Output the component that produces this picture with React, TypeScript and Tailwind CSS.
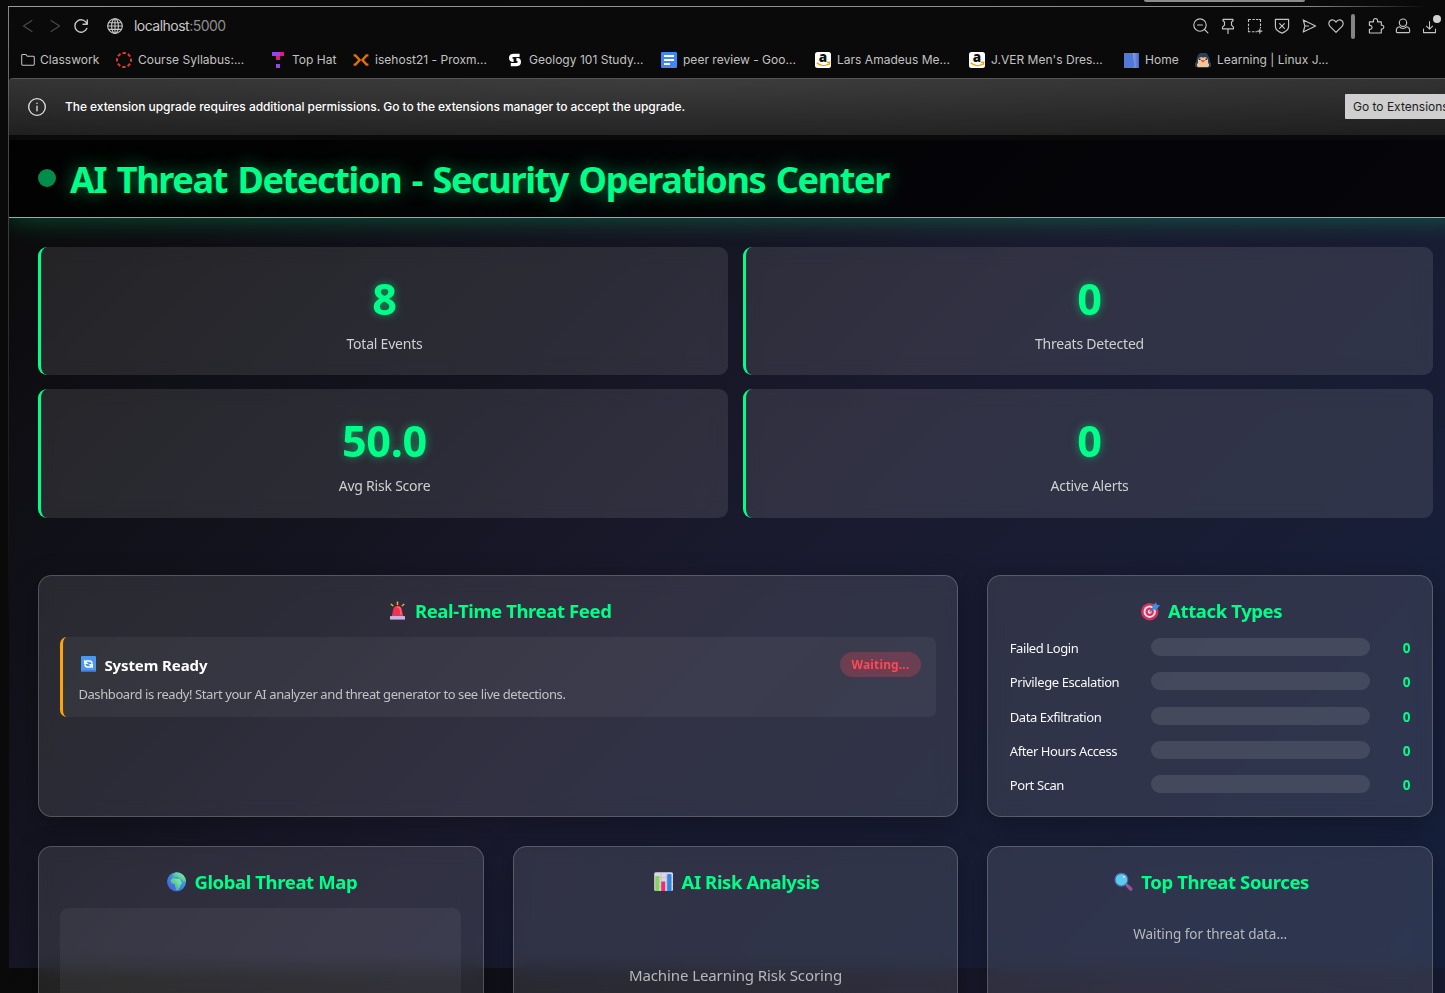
import React from "react";

/* ---------- browser toolbar icons ---------- */

function Line({ children, size = 16, className = "" }: { children: React.ReactNode; size?: number; className?: string }) {
  return (
    <svg
      width={size}
      height={size}
      viewBox="0 0 16 16"
      fill="none"
      stroke="currentColor"
      strokeWidth={1.15}
      strokeLinecap="round"
      strokeLinejoin="round"
      className={`block shrink-0 overflow-visible ${className}`}
    >
      {children}
    </svg>
  );
}

const toolIcons: React.ReactNode[] = [
  <>
    <circle cx="7" cy="7" r="6.2" />
    <path d="M4.6 7h4.8M11.5 11.5l3.4 3.4" />
  </>,
  <path d="M3 1.300h10v1.500l-1.500 1.200v3.200l2 2v1.600h-11V9.200l2-2V4L3 2.800zM8 10.800v4.600" />,
  <path d="M1.5 3.5v-2h2M5.8 1.5h1.6M9.4 1.5h1.6M12.5 1.5h1v2M1.5 6v1.6M1.5 9.8v1.4M1.5 12.8v.9h1.6M5.4 13.7h1.6M8.9 13.7h.9M13.5 5.8v1.6M13.5 9.2v.6M12.8 11v4.2M10.7 13.1h4.2" />,
  <path d="M1.400 1.400h13.200v7c0 3.100-2.700 5.100-6.600 6.700-3.900-1.600-6.600-3.600-6.600-6.700zM5.600 5.600l4.800 4.800M10.400 5.600l-4.800 4.800" />,
  <path d="M2.200 1.900l12.400 6.100L2.200 14.100l1.700-6.100zM3.900 8h3.600" />,
  <path d="M8 14.400L2 8.400C.4 6.700.5 4.100 2.100 2.800 3.900 1.300 6.600 1.800 8 4.200c1.400-2.400 4.100-2.900 5.900-1.400 1.600 1.300 1.700 3.900.1 5.600z" />,
];

const puzzle = (
  <path d="M1.400 3.800h4.100c-.5-2 .6-3.300 2-3.300s2.500 1.300 2 3.300h3.800v3.400c1.500-.3 2.500.7 2.500 1.900s-1 2.200-2.500 1.900v4H1.400v-3.800c1.700.3 2.600-.6 2.600-1.800s-.9-2.200-2.600-1.900z" />
);
const person = (
  <>
    <circle cx="8" cy="4.700" r="3.700" />
    <path d="M4.700 8.800C2.700 9.100 1.400 10.500 1.400 12v1.800c0 .5.300.8.800.8h11.600c.5 0 .8-.3.800-.8V12c0-1.500-1.300-2.900-3.300-3.200M4.700 8.800C5.800 11 10.200 11 11.300 8.800" />
  </>
);
const download = <path d="M8 2.600v8M4.700 7.700L8 10.900l3.300-3.200M1.600 10.600v3.900h12.800v-3.900" />;

/* ---------- bookmark icons ---------- */

const Syllabus = (
  <svg width="16" height="16" viewBox="0 0 16 16" className="block">
    <circle cx="8" cy="8" r="7" fill="none" stroke="#e13b2b" strokeWidth="2" strokeDasharray="3.400 2.100" strokeDashoffset="1.700" />
  </svg>
);
const TopHat = (
  <svg width="16" height="16" viewBox="0 0 16 16" className="block" shapeRendering="crispEdges">
    <path fill="#8f46f5" d="M2 0h8v4H2zM6 12h4v4H6z" />
    <path fill="#e6186f" d="M10 0h4v4h-4zM6 4h4v4H6z" />
  </svg>
);
const Proxmox = (
  <svg width="16" height="16" viewBox="0 0 16 16" className="block" fill="none" strokeWidth="2.400">
    <path stroke="#e57000" d="M.6 3.400h1.800L6.600 8l-4.200 4.600H.6M15.400 3.400h-1.800L9.400 8l4.200 4.600h1.800" />
  </svg>
);
const Study = (
  <svg width="16" height="16" viewBox="0 0 16 16" className="block">
    <path d="M12.600 3.400H7C4.600 3.400 3.600 4.700 3.600 6s1 2.400 3 2.400" fill="none" stroke="#fff" strokeWidth="3.200" />
    <path d="M3.800 12.600h5c2.400 0 3.600-1.200 3.600-2.700S11.400 7.400 9.400 7.400" fill="none" stroke="#fff" strokeWidth="3.200" />
  </svg>
);
const Docs = (
  <svg width="16" height="16" viewBox="0 0 16 16" className="block">
    <rect width="16" height="16" rx="1.200" fill="#4285f4" />
    <path fill="#fff" d="M3 3h10v2H3zM3 7h10v2H3zM3 11h6v2H3z" />
  </svg>
);
const Amazon = (
  <svg width="16" height="16" viewBox="0 0 16 16" className="block overflow-visible">
    <rect width="16" height="16" rx="2.500" fill="#fff" />
    <text x="7.900" y="9.800" textAnchor="middle" fontFamily="Open Sans, sans-serif" fontWeight="800" fontSize="13.500" fill="#111">a</text>
    <path d="M1.800 10.800c3.600 3.500 8.400 3.500 11.600 1.100M12 10.300l2.700-.1-.6 2.700" fill="none" stroke="#ff9900" strokeWidth="1.300" />
  </svg>
);
const HomeIcon = (
  <svg width="16" height="16" viewBox="0 0 16 16" className="block">
    <defs>
      <linearGradient id="pageEdge" x1="0" x2="1">
        <stop offset="0" stopColor="#8fa8e8" />
        <stop offset="1" stopColor="#4268cc" />
      </linearGradient>
    </defs>
    <rect x="1" y="1" width="15" height="15" fill="#5079d8" />
    <path d="M9.500 1H16v15h-5.500c1.500-2 .7-4 .2-7S11 3 9.500 1z" fill="url(#pageEdge)" />
  </svg>
);
const Penguin = (
  <svg width="16" height="16" viewBox="0 0 16 16" className="block">
    <path d="M5 1h6l2 2 1.200 3 .8 4 1 1v4h-2l-1 1H3l-1-1H0v-4l1-1 .8-4L3 3z" fill="#2c4054" />
    <path d="M4 6l2-1 2 .8L10 5l2 1 1 2v3l1 1v2l-1 1H3l-1-1v-2l1-1V8z" fill="#edc6a2" />
    <path d="M6 8h4v1l-2 1.500L6 9z" fill="#e0662b" />
    <path d="M4 6.500h1.500V8H4zM10.500 6.500H12V8h-1.500z" fill="#222" />
  </svg>
);
const Folder = (
  <Line size={14}>
    <path d="M.8 12.900V2.800c0-.7.400-1.100 1.100-1.100h3.700l1.800 2.100h6.700c.7 0 1.100.4 1.100 1.100v8c0 .7-.4 1.100-1.100 1.100H1.900c-.7 0-1.100-.4-1.100-1.100z" />
  </Line>
);

const bookmarks: { label: string; icon: React.ReactNode; cls: string }[] = [
  { label: "Classwork", icon: Folder, cls: "w-[95px] gap-[5px]" },
  { label: "Course Syllabus:...", icon: Syllabus, cls: "w-[154px] gap-1.5" },
  { label: "Top Hat", icon: TopHat, cls: "w-[83px] gap-1.5" },
  { label: "isehost21 - Proxm...", icon: Proxmox, cls: "w-[154px] gap-1.5" },
  { label: "Geology 101 Study...", icon: Study, cls: "w-[154px] gap-1.5" },
  { label: "peer review - Goo...", icon: Docs, cls: "w-[154px] gap-1.5" },
  { label: "Lars Amadeus Me...", icon: Amazon, cls: "w-[154px] gap-1.5" },
  { label: "J.VER Men's Dres...", icon: Amazon, cls: "w-[154px] gap-1.5" },
  { label: "Home", icon: HomeIcon, cls: "w-[72px] gap-1.5" },
  { label: "Learning | Linux J...", icon: Penguin, cls: "gap-1.5" },
];

/* ---------- panel heading pictograms ---------- */

const Siren = (
  <svg width="20" height="20" viewBox="0 0 20 20" className="block">
    <path d="M9.500.5v3.600M2.800 3l2.500 2M16.300 3l-2.500 2" stroke="#e3b341" strokeWidth="1.500" fill="none" />
    <path d="M3.700 15.500L5.300 8c.4-2 2-3.300 4.200-3.300S13.300 6 13.700 8l1.600 7.500z" fill="#f2334f" />
    <path d="M9 6c2.300 0 3.300.8 3.500 3l.6 5" stroke="#ff6675" strokeWidth="1.500" fill="none" />
    <rect x="2" y="15" width="15" height="4" rx=".6" fill="#c9b3e0" />
    <path d="M2 18h15v1H2z" fill="#8f76b0" />
  </svg>
);
const Target = (
  <svg width="20" height="20" viewBox="0 0 20 20" className="block">
    <circle cx="8.700" cy="10.700" r="8.700" fill="#d92f5c" />
    <circle cx="8.700" cy="10.700" r="6.200" fill="#e6dbe9" />
    <circle cx="8.700" cy="10.700" r="4.200" fill="#d92f5c" />
    <circle cx="8.700" cy="10.700" r="2" fill="#e6dbe9" />
    <path d="M8.700 10.700l5.600-5.600" stroke="#4f7ba8" strokeWidth="1.500" />
    <path d="M11.300 5.300L15 1.200l.8 2.600 3.300.8-4.200 3.900-3 .3z" fill="#2f94e6" />
  </svg>
);
const Globe = (
  <svg width="20" height="20" viewBox="0 0 20 20" className="block">
    <defs>
      <linearGradient id="sea" x1="0" y1="1" x2="1" y2="0">
        <stop offset="0" stopColor="#4457d2" />
        <stop offset="1" stopColor="#39b9f5" />
      </linearGradient>
      <linearGradient id="land" x1="0" y1="1" x2="1" y2="0">
        <stop offset="0" stopColor="#3f9a75" />
        <stop offset="1" stopColor="#85ffbd" />
      </linearGradient>
      <clipPath id="disc">
        <circle cx="9.500" cy="9.700" r="9.500" />
      </clipPath>
    </defs>
    <circle cx="9.500" cy="9.700" r="9.500" fill="url(#sea)" />
    <g clipPath="url(#disc)" fill="url(#land)">
      <path d="M3.600 8.200l1.600-1.700 3.600-.3 2.600.9 1.600.2 1.200 2.600 1 .5-1.600 2.500-.7 2.400-1.800 2.600-1.600.3-1.200-3-.3-3-2.800-.6-1.600-1.600z" />
      <path d="M5 5.400l.7-2.200L8.500.3 14 0l5 4 .8 5.500-1.600.7-1-1.800-1.100 1.700-1.900-2.600-3-.9-1.400-1-2.300.4z" />
    </g>
    <path d="M8 5.900h3.500M6.300 4.700h1.400" stroke="#3a86c9" strokeWidth=".7" />
  </svg>
);
const Chart = (
  <svg width="20" height="20" viewBox="0 0 20 20" className="block">
    <rect x=".2" y=".2" width="18.800" height="18.800" rx="1.500" fill="#ddd5e6" />
    <path d="M0 5.500h19M0 10h19M0 14.500h19M7 0v19M12.500 0v19" stroke="#bfb3cc" strokeWidth=".6" />
    <path d="M1.300 19V5c0-.6.300-.9.900-.9h2.200c.6 0 .9.300.9.900v14z" fill="#84d65a" />
    <path d="M7.200 19v-8.600c0-.6.300-.9.900-.9h2.200c.6 0 .9.300.9.900V19z" fill="#e8326c" />
    <path d="M13.200 19V3c0-.6.300-.9.900-.9h2.500c.6 0 .9.300.9.900v16z" fill="#2f86e0" />
  </svg>
);
const Lens = (
  <svg width="20" height="20" viewBox="0 0 20 20" className="block">
    <path d="M12 12.300l2.500 2.500" stroke="#9b93a8" strokeWidth="2" />
    <path d="M14 14.300l2.800 2.800" stroke="#96519a" strokeWidth="3.600" strokeLinecap="round" />
    <circle cx="7.400" cy="7.700" r="6.400" fill="#5cc9ee" stroke="#4b6fae" strokeWidth="1.200" />
    <circle cx="10" cy="4.800" r="1.100" fill="#bdeeff" />
  </svg>
);

/* ---------- dashboard pieces ---------- */

function Stat({ value, label }: { value: string; label: string }) {
  return (
    <div className="flex h-[128.6px] flex-col items-center rounded-[9px] border-l-[3px] border-[#00ff88] bg-white/10 pt-[30px] backdrop-blur-[9px]">
      <div className="text-[43.2px] leading-[43px] font-bold tracking-[-0.3px] text-[#00ff88] [text-shadow:0_0_9px_rgba(0,255,136,0.5)]">
        {value}
      </div>
      <div className="mt-[14px] text-[14px] leading-5 tracking-[-0.22px] text-[#d0d0d0]">{label}</div>
    </div>
  );
}

function Panel({ icon, title, className = "", children }: { icon: React.ReactNode; title: string; className?: string; children?: React.ReactNode }) {
  return (
    <section
      className={`rounded-[13.5px] border border-white/20 bg-white/10 px-[21.400px] pt-[20.6px] shadow-[0_7px_29px_rgba(0,0,0,0.3)] backdrop-blur-[9px] ${className}`}
    >
      <h3 className="mb-3 flex h-7 items-center justify-center gap-[7px] pl-[3px] text-[18.5px] leading-7 font-bold tracking-[-0.38px] text-[#00ff88]">
        {icon}
        <span>{title}</span>
      </h3>
      {children}
    </section>
  );
}

const attacks = ["Failed Login", "Privilege Escalation", "Data Exfiltration", "After Hours Access", "Port Scan"];

export default function App() {
  return (
    <div className="relative flex h-[993px] w-[1445px] flex-col overflow-hidden bg-[#0a0a0a] pl-2">
      <div className="absolute top-0 left-[1144px] h-0.5 w-[161px] rounded-b bg-[#8c8c8c]" />

      {/* window frame */}
      <div className="mt-1.5 h-px w-full shrink-0 bg-[linear-gradient(to_right,#9a9a9a_0,#8a8a8a_1300px,#0a0a0a_1420px)]" />
      <div className="flex flex-1">
        <div className="w-px shrink-0 bg-[linear-gradient(to_bottom,#8a8a8a_0,#4a4a4a_130px,#262626_380px,#0a0a0a_620px)]" />
        <div className="w-[1436px] shrink-0 font-['Inter',sans-serif]">
          {/* address bar */}
          <div className="flex h-[39px] items-center pb-px text-[#c4c4c4]">
            <div className="flex w-[1178.500px] shrink-0 items-center">
              <Line className="ml-[11px] text-[#4a4a4a]"><path d="M12 2.500L3.500 8 12 13.500" /></Line>
              <Line className="ml-[11px] text-[#4a4a4a]"><path d="M4 2.500L12.500 8 4 13.500" /></Line>
              <Line className="ml-[10px]"><path strokeWidth="1.400" d="M14.300 2v4.300H10M14 6.100A6.200 6.200 0 1 0 13.800 10.500" /></Line>
              <Line className="ml-[17.500px]">
                <circle cx="8" cy="8" r="7.300" />
                <ellipse cx="8" cy="8" rx="3.400" ry="7.300" />
                <path d="M8 .7v14.600M.7 8h14.600M1.900 4.700h12.200M1.900 11.300h12.200" />
              </Line>
              <span className="ml-[11.500px] text-[14px] leading-5 tracking-[-0.52px] text-[#c8c8c8]">
                localhost<span className="text-[#8e8e8e]">:5000</span>
              </span>
            </div>
            {toolIcons.map((ic, i) => (
              <div key={i} className="flex w-[27px] shrink-0 justify-center"><Line>{ic}</Line></div>
            ))}
            <div className="ml-[1.500px] h-[25px] w-1 shrink-0 rounded-sm bg-[#858585]" />
            <div className="ml-[7px] flex w-[27px] shrink-0 justify-center"><Line>{puzzle}</Line></div>
            <div className="flex w-[27px] shrink-0 justify-center"><Line>{person}</Line></div>
            <div className="relative flex w-[27px] shrink-0 justify-center">
              <Line size={15}>{download}</Line>
              <div className="absolute -top-1 right-[2px] size-2 rounded-full bg-[#d0d0d0]" />
            </div>
          </div>

          {/* bookmarks */}
          <div className="flex h-8 items-center pb-[5px] pl-3 text-[12px] tracking-[0.02px] whitespace-nowrap text-[#c2c2c2]">
            {bookmarks.map((b) => (
              <div key={b.label} className={`flex shrink-0 items-center ${b.cls}`}>
                {b.icon}
                <span>{b.label}</span>
              </div>
            ))}
          </div>

          {/* extension notice */}
          <div className="flex h-[57px] items-center overflow-hidden rounded-tl border-t border-[#555555] bg-[radial-gradient(ellipse_900px_90px_at_45%_0%,rgba(255,255,255,0.06),transparent),linear-gradient(to_bottom,#313131,#1f1f1f)] pb-px pl-[18.500px] text-[12px] text-white">
            <Line size={18} className="text-[#e0e0e0]">
              <circle cx="8" cy="8" r="7.400" strokeWidth="1.200" />
              <path strokeWidth="1.200" d="M8 7.200v4.200M8 4.600v.2" />
            </Line>
            <span className="ml-[19.500px] w-[1280px] shrink-0 font-medium tracking-[-0.06px]">
              The extension upgrade requires additional permissions. Go to the extensions manager to accept the upgrade.
            </span>
            <button className="h-[25px] shrink-0 rounded-[1px] bg-[#cfcfcf] px-2 text-[#1c1c1c]">Go to Extensions</button>
          </div>
          <div className="h-[5px] bg-[#0a0a0a]" />

          {/* dashboard page */}
          <div className="h-[853px] w-[1453px] overflow-hidden bg-[linear-gradient(135deg,#0a0a0a_0%,#1a1a2e_50%,#16213e_100%)] bg-[length:1453px_828px] font-['Noto_Sans',sans-serif] text-white">
            <header className="flex h-[78px] items-center border-b border-[#00ff88] bg-black/80 pl-[29px] shadow-[0_0_27px_rgba(0,255,136,0.3)]">
              <div className="mb-px size-[18px] rounded-full bg-[#00ff88] opacity-55" />
              <h1 className="mt-[3px] ml-[14px] text-[36px] leading-[48px] font-bold tracking-[-1.340px] whitespace-nowrap text-[#00ff88] [text-shadow:0_0_18px_rgba(0,255,136,0.5)] [word-spacing:2.500px]">
                AI Threat Detection - Security Operations Center
              </h1>
            </header>

            <main className="px-[29px] pt-[28.8px]">
              <div className="grid grid-cols-2 gap-x-[15px] gap-y-[14px]">
                <Stat value="8" label="Total Events" />
                <Stat value="0" label="Threats Detected" />
                <Stat value="50.0" label="Avg Risk Score" />
                <Stat value="0" label="Active Alerts" />
              </div>

              <div className="mt-[57px] grid grid-cols-3 gap-[29px]">
                <Panel icon={Siren} title="Real-Time Threat Feed" className="col-span-2 h-[242px]">
                  <div className="h-20 rounded-[7px] border-l-[3px] border-[#ffa500] bg-white/5 pt-[15px] pr-[15px] pl-[15px]">
                    <div className="flex h-[25px] items-center">
                      <svg width="15" height="16" viewBox="0 0 15 16" className="ml-[3px] block">
                        <rect width="15" height="16" rx="1" fill="#4c98f0" />
                        <path d="M0 14.500h15V16H0z" fill="#3c70c8" />
                        <path d="M4.500 5h4c1.500 0 2.500 1 2.500 2.800M10.500 11h-4C5 11 4 10 4 8.200" fill="none" stroke="#fff" strokeWidth="1.500" />
                        <path d="M3 3.500V8h4.500zM12 12.500V8H7.500z" fill="#fff" />
                      </svg>
                      <span className="mt-[2px] ml-[8px] flex-1 text-[15px] leading-6 font-bold tracking-[-0.1px]">System Ready</span>
                      <span className="flex h-[25px] w-[81px] items-center justify-center rounded-full bg-[#ff4757]/25 pt-[2px] text-[12px] leading-4 font-bold tracking-[0.15px] text-[#ff4757]">
                        Waiting...
                      </span>
                    </div>
                    <p className="mt-[7px] text-[13px] leading-5 tracking-[-0.41px] whitespace-nowrap text-[#c2c2c5]">
                      Dashboard is ready! Start your AI analyzer and threat generator to see live detections.
                    </p>
                  </div>
                </Panel>

                <Panel icon={Target} title="Attack Types" className="h-[242px]">
                  {attacks.map((name) => (
                    <div key={name} className="flex h-[34.400px] items-start pt-[0.300px]">
                      <span className="w-[141px] text-[13px] leading-[22px] tracking-[-0.4px] whitespace-nowrap text-[#f8f8f8]">{name}</span>
                      <div className="mt-px h-[18px] w-[219px] rounded-full bg-white/10" />
                      <span className="flex-1 text-right text-[13.5px] leading-[22px] font-bold text-[#00ff88]">0</span>
                    </div>
                  ))}
                </Panel>

                <Panel icon={Globe} title="Global Threat Map" className="h-[360px]">
                  <div className="h-[260px] rounded-[9px] bg-white/5" />
                </Panel>
                <Panel icon={Chart} title="AI Risk Analysis" className="h-[360px]">
                  <p className="pt-[57px] text-center text-[15px] leading-5 tracking-[-0.090px] text-[#b8b8bb]">Machine Learning Risk Scoring</p>
                </Panel>
                <Panel icon={Lens} title="Top Threat Sources" className="h-[360px]">
                  <p className="pt-4 text-center text-[13.5px] leading-5 tracking-[-0.040px] text-[#b8b8bd]">Waiting for threat data...</p>
                </Panel>
              </div>
            </main>
          </div>
        </div>
      </div>
    </div>
  );
}
